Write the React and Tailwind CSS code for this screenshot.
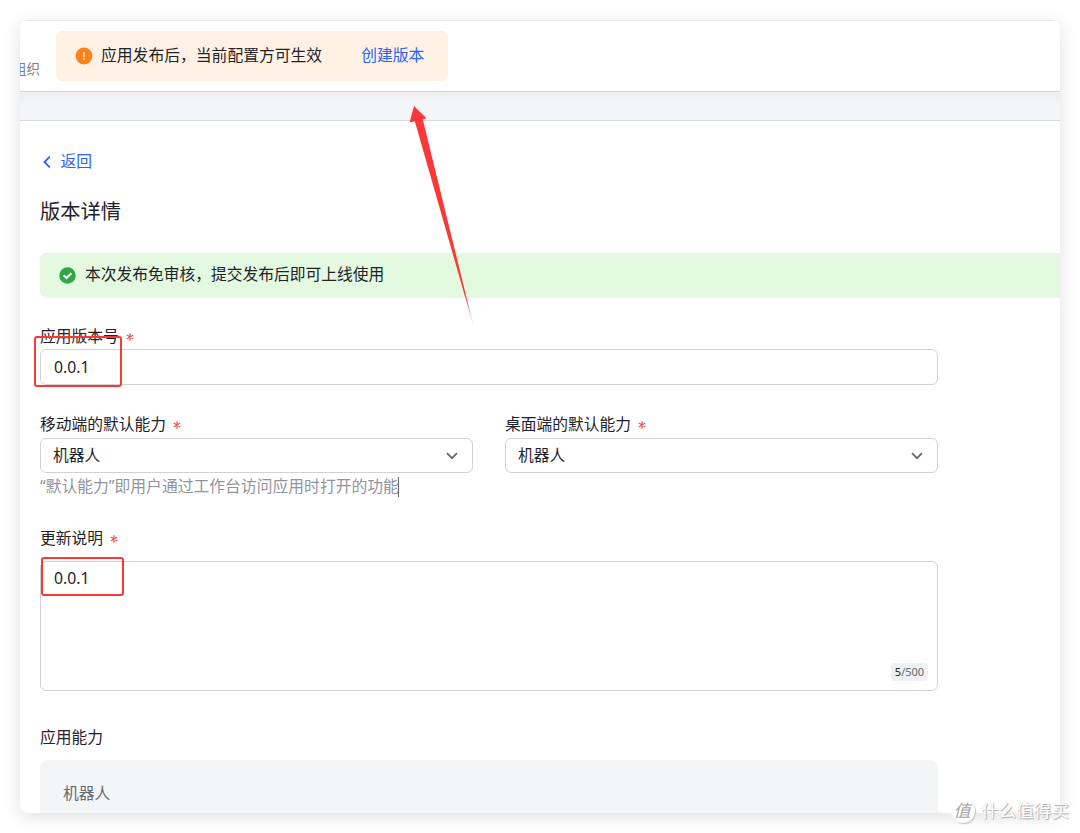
function Chevron({ className, d }) {
  return (
    <svg width="14" height="14" viewBox="0 0 14 14" fill="none" stroke="currentColor" strokeWidth="1.8" className={className}>
      <path d={d} />
    </svg>
  );
}

function Label({ children, required, className }) {
  return (
    <div className={`flex items-center text-[15.75px] leading-6 ${className || ""}`}>
      <span>{children}</span>
      {required && (
        <svg width="8" height="8" viewBox="0 0 8 8" className="ml-[7px] mt-0.5" stroke="#f54a45" strokeWidth="1.2" strokeLinecap="round">
          <path d="M4 0.7v6.6M1.2 2.3l5.6 3.4M6.8 2.3L1.2 5.7" />
        </svg>
      )}
    </div>
  );
}

function SelectField({ label, value }) {
  return (
    <div className="flex-1">
      <Label required className="h-[26px] pb-0.5">{label}</Label>
      <div className="flex items-center h-[35px] rounded-md border border-[#d0d3d6] pl-3 pr-[13px] text-[15.75px]">
        <span>{value}</span>
        <Chevron className="ml-auto text-[#646a73]" d="M2 4.2L7 9.2L12 4.2" />
      </div>
    </div>
  );
}

function Header() {
  return (
    <div className="flex h-[72px] shrink-0 border-t border-t-[#e9e9ea] border-b border-b-[#d5d7da]">
      <div className="w-9 overflow-hidden flex justify-end items-center pt-[26px] pr-4">
        <span className="shrink-0 whitespace-nowrap text-[13.5px] text-[#7b8088]">组织</span>
      </div>
      <div className="mt-2.5 h-[50px] w-[392px] rounded-md bg-[#fff2e5] flex items-center pl-[19px] text-[15.8px]">
        <svg width="18" height="18" viewBox="0 0 18 18">
          <circle cx="9" cy="9" r="8.4" fill="#ff811a" />
          <rect x="8.1" y="5" width="1.8" height="5.3" rx="0.4" fill="#ffd9b5" />
          <rect x="8.1" y="11.2" width="1.8" height="1.7" rx="0.4" fill="#ffd9b5" />
        </svg>
        <span className="ml-2">应用发布后，当前配置方可生效</span>
        <span className="ml-[39px] text-[#2a63f6]">创建版本</span>
      </div>
    </div>
  );
}

function Annotations() {
  return (
    <>
      <div className="absolute left-[34px] top-[335.5px] w-[88px] h-[51px] rounded-[3px] border-2 border-[#fb3838]" />
      <div className="absolute left-[41px] top-[557px] w-[83px] h-[39px] rounded-[3px] border-2 border-[#fb3838]" />
      <svg className="absolute left-[400px] top-[96px]" width="90" height="240" viewBox="400 96 90 240">
        <defs>
          <linearGradient id="tail" x1="0" y1="106" x2="0" y2="328" gradientUnits="userSpaceOnUse">
            <stop offset="0.85" stopColor="#fb3838" />
            <stop offset="1" stopColor="#fb3838" stopOpacity="0.25" />
          </linearGradient>
        </defs>
        <path d="M414 106L426.4 118.3L422.8 119.4L474 328L414.8 121.2L409.6 122.4Z" fill="url(#tail)" />
      </svg>
    </>
  );
}

function Watermark() {
  return (
    <div className="absolute left-[951px] top-[799px] flex items-center text-white whitespace-nowrap">
      <div className="w-6 h-6 rounded-full bg-white shadow-[1px_1px_1px_#c4c4c4] flex items-center justify-center pb-0.5 pr-0.5 text-[17px] leading-none italic text-[#a6a6a6]">值</div>
      <span className="ml-1.5 -mt-0.5 text-[17.6px] leading-6 [text-shadow:1px_1px_1px_#aaa,0_0_1px_#ccc]">什么值得买</span>
    </div>
  );
}

export default function App() {
  return (
    <div className="relative w-[1080px] h-[833px] overflow-hidden bg-white p-5 text-[#1f2329] font-['Noto_Sans','Noto_Sans_CJK_SC',sans-serif]">
      <div className="flex flex-col h-[793px] rounded-lg overflow-hidden bg-white shadow-[0_4px_18px_rgba(0,0,0,0.12)]">
        <Header />
        <div className="h-[29px] shrink-0 border-b border-[#d9dbde] bg-linear-to-b from-[#eeeff1] to-[#f4f5f7] to-50%" />
        <div className="pl-5 pt-7 flex-1">
          <div className="flex items-center h-6 text-[15.75px] text-[#2a63f6]">
            <Chevron className="mt-0.5" d="M9.8 1.6L4.4 7L9.8 12.4" />
            <span className="ml-[6.5px] mt-0.5">返回</span>
          </div>
          <h1 className="mt-[23px] text-[20.25px] leading-[30px]">版本详情</h1>

          <div className="mt-[27px] flex items-center h-[45px] rounded-l-md bg-[#e3f9e0] pl-[19px] text-[15.75px]">
            <svg width="17" height="17" viewBox="0 0 17 17" fill="none">
              <circle cx="8.5" cy="8.5" r="8.2" fill="#32a645" />
              <path d="M4.6 8.2l2.8 2.8L12.4 6.2" stroke="#fff" strokeWidth="2" />
            </svg>
            <span className="ml-[9px] pb-0.5">本次发布免审核，提交发布后即可上线使用</span>
          </div>

          <div className="w-[898px]">
            <Label required className="mt-[26px] mb-px">应用版本号</Label>
            <div className="flex items-center h-9 rounded-md border border-[#d0d3d6] px-[13px] pt-0.5 text-[15.75px]">0.0.1</div>

            <div className="mt-[27px] flex gap-8">
              <SelectField label="移动端的默认能力" value="机器人" />
              <SelectField label="桌面端的默认能力" value="机器人" />
            </div>
            <div className="flex items-center h-7 text-[15.8px] text-[#8f959e]">
              <span>“默认能力”即用户通过工作台访问应用时打开的功能</span>
              <span className="w-px h-5 -ml-px bg-[#646a73]" />
            </div>

            <Label required className="mt-[25px]">更新说明</Label>
            <div className="mt-[11px] flex flex-col justify-between h-[130px] rounded-md border border-[#d0d3d6] px-[13px] pt-[5px] text-[15.75px]">
              <span>0.0.1</span>
              <span className="self-end -mr-1 mb-[9px] h-[18px] w-[37px] text-center rounded bg-[#eff0f1] text-[11px] leading-[18px] text-[#646a73]">
                <span className="text-[#1f2329]">5</span>/500
              </span>
            </div>

            <Label className="mt-[34px]">应用能力</Label>
            <div className="mt-[11px] h-20 rounded-t-lg bg-[#f4f5f7] pl-[23px] pt-[21px] text-[15.75px] leading-6 text-[#646a73]">
              机器人
            </div>
          </div>
        </div>
      </div>
      <Annotations />
      <Watermark />
    </div>
  );
}
